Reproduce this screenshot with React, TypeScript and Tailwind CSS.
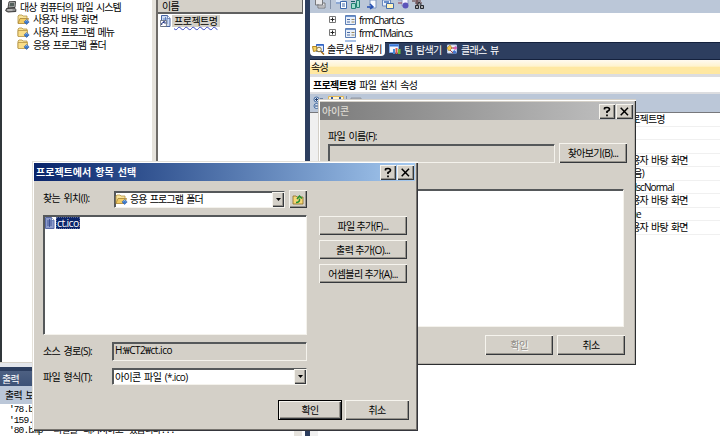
import type { ReactNode } from "react";

interface ButtonProps {
  children: ReactNode;
  className?: string;
  disabled?: boolean;
}

const raised =
  "bg-[#d4d0c8] shadow-[inset_1px_1px_0_#f6f4ee,inset_-1px_-1px_0_#35383c,inset_-2px_-2px_0_#96938c]";
const sunken =
  "border-t border-l border-t-[#55585a] border-l-[#55585a] border-b border-r border-b-[#f4f2ec] border-r-[#f4f2ec] shadow-[inset_1px_1px_0_#55585a]";

function Button({ children, className = "", disabled = false }: ButtonProps) {
  return (
    <button
      disabled={disabled}
      className={`flex shrink-0 items-center justify-center whitespace-nowrap ${raised} ${disabled ? "text-[#8d8a84] [text-shadow:1px_1px_0_#fff]" : ""} ${className}`}
    >
      {children}
    </button>
  );
}

function FolderIcon({ open = false }: { open?: boolean }) {
  return (
    <svg width="13" height="11" viewBox="0 0 13 11" className="shrink-0">
      <path d="M1 9V2l1-1h3l1 1h4v2" fill="#f8e39a" stroke="#b39243" strokeWidth=".8" />
      {open ? (
        <path d="M1 9.5 3 4.5h8.5L9.5 9.5Z" fill="#f3cd65" stroke="#a98332" strokeWidth=".8" />
      ) : (
        <path d="M1 3.5h9.5v6H1Z" fill="#f9dd88" stroke="#b39243" strokeWidth=".8" />
      )}
      <path d="m9.6 5.4 2.6 2.5-2.6 2.6L7 7.9Z" fill="#3a78cc" stroke="#234f97" strokeWidth=".5" />
      <path d="M8.5 7.4 9.6 6.3l.9.8" fill="none" stroke="#bfe0ff" strokeWidth=".8" />
    </svg>
  );
}

function ComputerIcon() {
  return (
    <svg width="12" height="12" viewBox="0 0 12 12" className="shrink-0">
      <path d="M4 .8 10.5.5 10 6.5 3 7Z" fill="#b9b9b9" stroke="#333" strokeWidth=".9" />
      <path d="M5 2 9.2 1.8 8.9 5.2 4.3 5.6Z" fill="#54605c" />
      <path d="M1.5 7.5 9.5 7l1.3 1.5v2L3 11 .7 9.8Z" fill="#8d8d8d" stroke="#292929" strokeWidth=".9" />
      <path d="M2.5 9h5" stroke="#eee" strokeWidth=".8" />
    </svg>
  );
}

function DocIcon({ shortcut = false, selected = false }: { shortcut?: boolean; selected?: boolean }) {
  return (
    <svg width="11" height="12" viewBox="0 0 11 12" className="shrink-0">
      <path d="M1.5.5h6l2.5 3v8h-8.5Z" fill={selected ? "#8d9ccb" : "#cfdcf2"} stroke={selected ? "#5a6aa6" : "#4663a3"} />
      <path d="M3 4h5M3 6h5M3 8h5M5.5 2v8" stroke={selected ? "#33478e" : "#4a6fb5"} strokeWidth=".8" />
      <path d="M7.5.5v3H10" fill="#fff" stroke="#4663a3" strokeWidth=".7" />
      {shortcut && (
        <>
          <path d="M.4 5.5h6v6h-6Z" fill="#fff" stroke="#5d6470" strokeWidth=".8" />
          <path d="M1.7 10V8.2l2.5-1M3 6.8h2v2" fill="none" stroke="#1c2f7c" />
        </>
      )}
    </svg>
  );
}

function FormRow({ name }: { name: string }) {
  return (
    <div className="flex h-[13px] shrink-0 items-center pl-[19px]">
      <svg width="7" height="7" viewBox="0 0 7 7" className="mr-[9px] shrink-0">
        <path d="M.5.5h6v6h-6Z" fill="#fff" stroke="#777" />
        <path d="M1.5 3.5h4M3.5 1.5v4" stroke="#222" />
      </svg>
      <svg width="11" height="10" viewBox="0 0 11 10" className="mr-[3px] shrink-0">
        <path d="M.5.5h10v9H.5Z" fill="#e9f0fa" stroke="#5d7fb5" />
        <path d="M1 1.5h9" stroke="#6c93cf" />
        <path d="M2 4.5h3M2 7h3" stroke="#4a6ba3" />
        <path d="M6.5 4.5h3M6.5 7h3" stroke="#9a8a62" />
      </svg>
      <span className="tracking-[-0.9px]">{name}</span>
    </div>
  );
}

function ToolbarIcons() {
  return (
    <svg width="112" height="10" viewBox="0 0 112 10" className="ml-[4px] shrink-0">
      <path d="M1.5 0v5h7V0M4 4v4h7V3H9" fill="#e8e8ea" stroke="#77787c" />
      <path d="M5 6h5" stroke="#8d8f95" />
      <path d="M16.5 0v9" stroke="#8391a8" />
      <path d="M22 0h6v4h-6Z" fill="#dbe8fb" />
      <path d="M22 3h4M26.5 1.5h6v7h-6Z" fill="#fff" stroke="#3f68ac" />
      <path d="M28 4h3M28 6h3" stroke="#3f68ac" />
      <path d="M37.5 3.5h4v5h-4ZM42.5.5h3v7h-3Z" fill="#9fdccb" stroke="#258275" />
      <path d="M37 1.5h4" stroke="#175e63" />
      <path d="M56 0h6v8h-6Z" fill="#f8fbff" stroke="#7b93bd" />
      <path d="M53 7h5M56 4l3 3-3 2" fill="none" stroke="#2852b3" strokeWidth="1.5" />
      <path d="M68.5 0h8v6h-8Z" fill="#e7effa" stroke="#6988bd" />
      <path d="M72.5 3.5h7v5h-7Z" fill="#fff3bb" stroke="#416baa" />
      <path d="M70 2h5" stroke="#4170bd" strokeWidth="1.5" />
      <path d="M84 0h4v6l6-2V0" fill="#f6f3ff" stroke="#8f9cc4" />
      <circle cx="91.5" cy="5.5" r="3" fill="#5c54ba" />
      <path d="M84 3h4" stroke="#963e56" />
      <path d="M98 1h9M101 3h7M103 0v5" stroke="#5e3636" />
      <path d="M101.5 5.5h3v3h-3ZM106.5 5.5h3v3h-3ZM103 6l2-4 3 4" fill="#aaa" stroke="#272a31" />
    </svg>
  );
}

function SolutionIcon() {
  return (
    <svg width="13" height="11" viewBox="0 0 13 11" className="shrink-0">
      <path d="M4.5.5h7v7h-7Z" fill="#e8f0ff" stroke="#3865b9" />
      <path d="M4.5 1h7" stroke="#3166cb" strokeWidth="1.5" />
      <path d="M.5 2.5h4l1 4-4 1Z" fill="#f7d463" stroke="#b48620" />
      <circle cx="7" cy="5.5" r="2.3" fill="#fff7d8" stroke="#87733b" />
      <path d="m9 7.5 3 3" stroke="#a36b16" strokeWidth="1.5" />
    </svg>
  );
}

function TeamIcon() {
  return (
    <svg width="12" height="11" viewBox="0 0 12 11" className="shrink-0">
      <path d="M.5.5h9v8h-9Z" fill="#f1f5fc" stroke="#7cabef" />
      <path d="M.5 1.5h9" stroke="#3975d5" strokeWidth="2" />
      <path d="M4 5h2v5H4Z" fill="#458bd7" />
      <path d="M6.5 4h2v6h-2Z" fill="#e25847" />
      <path d="M9 5h2.5v5H9Z" fill="#69b53e" />
    </svg>
  );
}

function ClassIcon() {
  return (
    <svg width="12" height="11" viewBox="0 0 12 11" className="shrink-0">
      <path d="M1.5 1h9v8h-9Z" fill="#edf2fb" stroke="#b6c8e5" />
      <path d="m1 4 3-3 2 3-3 3Z" fill="#f6c94b" stroke="#a97f1a" strokeWidth=".6" />
      <path d="m7 4 2.5-2L11.5 4 9 6Z" fill="#d461b5" />
      <path d="m6 8 2.5-2L11 8.5 8 10Z" fill="#4676cd" />
      <path d="M5 4h3M4 6l3 3" stroke="#a74545" />
    </svg>
  );
}

function Caption({ title, active = false }: { title: string; active?: boolean }) {
  return (
    <div
      className={`flex h-[18px] shrink-0 items-center pl-[2px] pr-[1px] ${
        active
          ? "bg-linear-to-r from-[#0a246a] to-[#a6caf0] font-bold tracking-[0px] text-white"
          : "bg-linear-to-r from-[#7c7c7c] to-[#c3c3c3] font-medium tracking-[-0.2px] text-[#dcd9d2]"
      }`}
    >
      <span className="flex-1">{title}</span>
      <Button className="h-[15px] w-[16px]">
        <svg width="10" height="11" viewBox="0 0 10 11">
          <path d="M2.5 3.5V2.500Q2.500 1.500 5 1.500T7.500 3.300Q7.500 4.500 5 5.500V7M5 8.500v1.700" fill="none" stroke="#000" strokeWidth="1.7" />
        </svg>
      </Button>
      <Button className="ml-[1px] h-[15px] w-[17px]">
        <svg width="9" height="9" viewBox="0 0 9 9">
          <path d="m.7.7 7.300 7.600M8 .7.7 8.300" stroke="#000" strokeWidth="1.5" />
        </svg>
      </Button>
    </div>
  );
}

function DropArrow() {
  return (
    <div className={`flex h-full w-[12px] shrink-0 items-center justify-center ${raised}`}>
      <svg width="5" height="3" viewBox="0 0 5 3">
        <path d="M0 0h5L2.5 3Z" fill="#000" />
      </svg>
    </div>
  );
}

function IconDialog() {
  return (
    <div className="absolute left-[318px] top-[99px] flex h-[266px] w-[318px] flex-col bg-[#d4d0c8] px-[2px] pt-[3px] shadow-[inset_1px_1px_0_#d4d0c8,inset_2px_2px_0_#fff,inset_-1px_-1px_0_#2c2e30,inset_-2px_-2px_0_#b5b1aa]">
      <Caption title="아이콘" />
      <div className="flex flex-col pl-[8px] pt-[9px]">
        <span className="flex h-[14px] items-center">파일 이름(F):</span>
        <div className="flex items-start gap-[4px]">
          <div className={`mt-px h-[19px] w-[227px] ${sunken}`} />
          <Button className="h-[20px] w-[68px]">찾아보기(B)...</Button>
        </div>
        <div className={`mt-[26px] h-[138px] w-[296px] bg-white ${sunken}`} />
        <div className="mt-[8px] flex gap-[4px] pl-[157px]">
          <Button className="h-[20px] w-[68px]" disabled>확인</Button>
          <Button className="h-[20px] w-[68px]">취소</Button>
        </div>
      </div>
    </div>
  );
}

function SelectItemDialog() {
  return (
    <div className="absolute left-[32px] top-[161px] flex h-[270px] w-[386px] flex-col bg-[#d4d0c8] pl-[2px] pr-[3px] pt-[2px] shadow-[inset_1px_1px_0_#e4e1da,inset_2px_2px_0_#fff,inset_-1px_-1px_0_#35363c,inset_-2px_-2px_0_#77746f]">
      <Caption title="프로젝트에서 항목 선택" active />
      <div className="flex flex-col pl-[9px] pt-[9px]">
        <div className="flex h-[18px] items-center">
          <span className="w-[71px] pb-[2px]">찾는 위치(I):</span>
          <div className={`flex h-[17px] w-[171px] items-center bg-white ${sunken}`}>
            <div className="flex flex-1 items-center gap-[2px] tracking-[-0.9px]">
              <FolderIcon open />
              <span>응용 프로그램 폴더</span>
            </div>
            <DropArrow />
          </div>
          <Button className="ml-[4px] h-[18px] w-[18px]">
            <svg width="12" height="11" viewBox="0 0 12 11">
              <path d="M1 10V2h3l1 1h6v7Z" fill="#f5d675" stroke="#8a6c23" strokeWidth=".8" />
              <path d="M4 8.500Q8 8.500 7.500 4.500M5 5l2.500-3L10 4.500" fill="none" stroke="#229032" strokeWidth="1.5" />
            </svg>
          </Button>
        </div>
        <div className="mt-[7px] flex gap-[12px]">
          <div className={`h-[120px] w-[264px] bg-white ${sunken}`}>
            <div className="flex items-center pt-[1px]">
              <DocIcon selected />
              <span className="ml-px flex h-[12px] items-center bg-[#0a246a] px-[1px] text-[10.5px] text-white outline-1 -outline-offset-1 outline-dotted outline-[#59679a]">ct.ico</span>
            </div>
          </div>
          <div className="flex flex-col gap-[5px] pt-[1px]">
            <Button className="h-[19px] w-[88px]">파일 추가(F)...</Button>
            <Button className="h-[19px] w-[88px]">출력 추가(O)...</Button>
            <Button className="h-[19px] w-[88px]">어셈블리 추가(A)...</Button>
          </div>
        </div>
        <div className="mt-[7px] flex h-[19px] items-center">
          <span className="w-[69px] pb-[2px]">소스 경로(S):</span>
          <div className={`flex h-[19px] w-[195px] items-center pb-[4px] pl-[2px] tracking-[-0.45px] ${sunken}`}>H:₩CT2₩ct.ico</div>
        </div>
        <div className="mt-[7px] flex h-[17px] items-center">
          <span className="w-[69px]">파일 형식(T):</span>
          <div className={`flex h-[17px] w-[195px] items-center bg-white ${sunken}`}>
            <span className="flex-1 pl-[2px]">아이콘 파일 (*.ico)</span>
            <DropArrow />
          </div>
        </div>
        <div className="mt-[15px] flex gap-[3px] pl-[235px]">
          <Button className="h-[20px] w-[64px] border border-black">확인</Button>
          <Button className="h-[20px] w-[64px]">취소</Button>
        </div>
      </div>
    </div>
  );
}

const folders = ["사용자 바탕 화면", "사용자 프로그램 메뉴", "응용 프로그램 폴더"];
const values = ["프로젝트명", "", "", "사용자 바탕 화면", "(없음)", "vsdscNormal", "사용자 바탕 화면", "True", "사용자 바탕 화면"];

function FileSystemPane() {
  return (
    <div className="flex w-[305px] shrink-0 flex-col bg-white">
      <div className="flex h-[363px] shrink-0 border-b border-[#d4d0c8]">
        <div className="w-[152px] border-l-2 border-[#30363a] bg-white pl-[3px] tracking-[-0.9px]">
          <div className="flex h-[13px] items-center gap-[3px]">
            <ComputerIcon />
            <span>대상 컴퓨터의 파일 시스템</span>
          </div>
          {folders.map((name, i) => (
            <div key={name} className="flex h-[12.7px] items-center gap-[3px] pl-[12px]">
              <FolderIcon open={i === 0} />
              <span>{name}</span>
            </div>
          ))}
        </div>
        <div className="w-[4px] bg-[#e6e3dc]" />
        <div className="flex w-[147px] flex-col border-l-2 border-[#6f6c68]">
          <div className="flex h-[14px] shrink-0 items-center border-b-2 border-r border-[#606060] bg-[#d4d0c8] pl-[4px]">이름</div>
          <div className="flex h-[13px] items-center pl-[2px]">
            <DocIcon shortcut />
            <span className="ml-[1px] flex h-[12px] items-center bg-[#d4d0c8] px-[2px] underline decoration-[#3344c4] decoration-wavy decoration-[0.5px] underline-offset-1 tracking-[-0.5px]">프로젝트명</span>
          </div>
        </div>
      </div>
      <div className="h-[4px] shrink-0 bg-[#e3e6ec]" />
      <div className="h-[4px] shrink-0 bg-[#2b3d5f]" />
      <div className="flex h-[15px] shrink-0 items-center bg-linear-to-b from-[#4d6082] to-[#3d5277] pl-[2px] text-white">출력</div>
      <div className="flex h-[18px] shrink-0 items-center bg-[#bbc7d8] pl-[5px]">출력 보기 선택(S):</div>
      <div className="flex flex-1">
        <div className="flex-1 overflow-hidden whitespace-pre pl-[9px] pt-px font-['Liberation_Mono','Noto_Sans_CJK_KR',monospace] text-[9.5px] leading-[10.6px] tracking-[-0.9px]">
          <div>'78.bmp' 파일을 패키지하고 있습니다...</div>
          <div>'159.bmp' 파일을 패키지하고 있습니다...</div>
          <div>'80.bmp' 파일을 패키지하고 있습니다...</div>
        </div>
        <div className="mr-[3px] w-[8px] bg-[#e6e3dd]" />
      </div>
    </div>
  );
}

function SolutionPane() {
  return (
    <div className="flex min-w-0 flex-1 flex-col bg-white">
      <div className="flex h-[13px] shrink-0 bg-[#bbc7d8]">
        <ToolbarIcons />
      </div>
      <div className="h-[29px] shrink-0 overflow-hidden">
        <FormRow name="frmChart.cs" />
        <FormRow name="frmCTMain.cs" />
        <div className="ml-[35px] mt-[1px] h-[2px] w-[11px] bg-[#a9c2e6]" />
      </div>
      <div className="flex h-[18px] shrink-0 border-b border-t border-[#14213d] bg-[#2d3e5f] pb-[3px] text-white">
        <div className="-mt-px flex w-[75px] items-center gap-[2px] rounded-b-sm bg-white pl-[2px] text-black">
          <SolutionIcon />
          <span className="whitespace-nowrap">솔루션 탐색기</span>
        </div>
        <div className="flex w-[58px] items-center gap-[3px] pl-[4px]">
          <TeamIcon />
          <span className="whitespace-nowrap">팀 탐색기</span>
        </div>
        <div className="flex items-center gap-[3px] pl-[3px]">
          <ClassIcon />
          <span className="whitespace-nowrap">클래스 뷰</span>
        </div>
      </div>
      <div className="flex h-[14px] shrink-0 items-center rounded-tl-sm bg-linear-to-b from-[#fffaf0] from-0% via-[#fff3cd] via-45% to-[#ffe8a1] to-50% pl-[1px]">속성</div>
      <div className="flex h-[20px] shrink-0 items-center border-b-2 border-t-3 border-[#dcdde0] pl-[3px] pt-[1px]">
        <span className="font-bold">프로젝트명</span>
        <span className="whitespace-pre"> 파일 설치 속성</span>
      </div>
      <div className="h-[19px] shrink-0 border-b border-[#77787c] bg-[#bbc7d8] pl-[3px]">
        <svg width="60" height="15" viewBox="0 0 60 15">
          <circle cx="3.5" cy="5.5" r="2.5" fill="#dfe9f6" stroke="#426a9f" />
          <circle cx="3.5" cy="12" r="2.5" fill="#dfe9f6" stroke="#426a9f" />
          <path d="M2 5.5h3M3.5 4v3M2 12h3M7 5h3" stroke="#223f70" />
          <path d="M15.5 2.5h15v12h-15Z" fill="#fff4cf" stroke="#e0b656" />
          <path d="M19 3v3M27 3v3" stroke="#3157a1" strokeWidth="2" />
          <path d="M33.5 2v12" stroke="#8391a8" />
          <path d="M38 4h10v5H38Z" fill="#aeb2ba" stroke="#9297a0" />
        </svg>
      </div>
      <div className="flex flex-1">
        <div className="w-[8px] bg-[#f0f0f0]" />
        <div className="flex-1 bg-white tracking-[-0.9px]">
          {values.map((value, i) => (
            <div key={i} className="flex h-[13.5px] items-center border-b border-[#f0f0f0] pl-[305px]">
              <span className="whitespace-nowrap">{value}</span>
            </div>
          ))}
        </div>
      </div>
    </div>
  );
}

export default function App() {
  return (
    <div className="relative flex h-[436px] w-[720px] overflow-hidden bg-white font-['Open_Sans','Noto_Sans_CJK_KR',sans-serif] text-[10px] leading-none tracking-[-0.65px] [word-spacing:1.5px] text-black">
      <FileSystemPane />
      <div className="w-[5px] shrink-0 bg-[#2d3e5f]" />
      <SolutionPane />
      <IconDialog />
      <SelectItemDialog />
    </div>
  );
}
